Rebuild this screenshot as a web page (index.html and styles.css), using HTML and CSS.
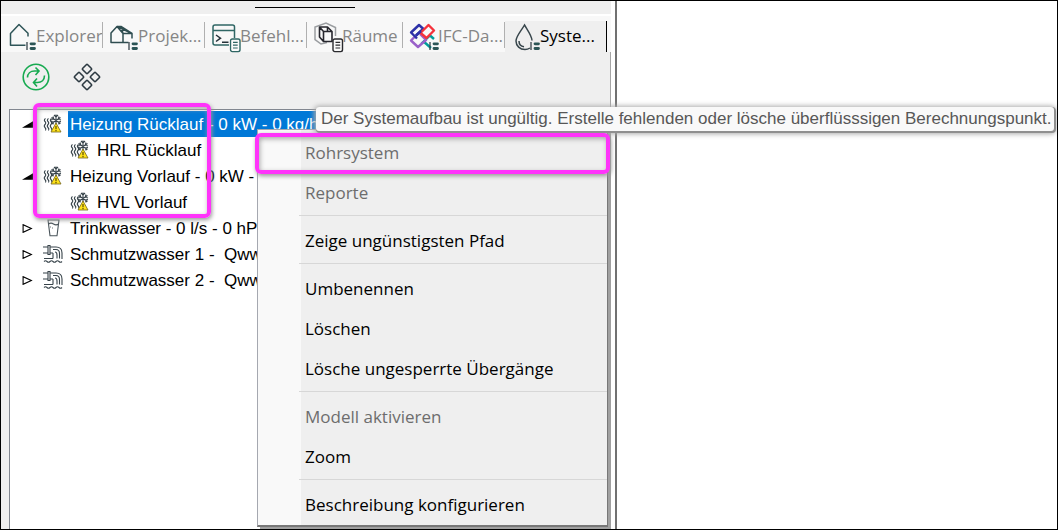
FILE: index.html
```html
<!DOCTYPE html>
<html lang="de">
<head>
<meta charset="utf-8">
<meta name="viewport" content="width=device-width, initial-scale=1">
<title>Systeme</title>
<link rel="stylesheet" href="styles.css">
</head>
<body>
<svg class="defs" aria-hidden="true">
  <defs>
    <symbol id="list-badge" viewBox="0 0 10 9">
      <path d="M1 0v8" stroke="#37434a" stroke-width="1.3"/>
      <path d="M5 1.800h3.500M5 6.500h3.500" stroke="#2c5555" stroke-width="2.800" stroke-linecap="round"/>
    </symbol>
    <symbol id="sheet-badge" viewBox="0 0 12 15">
      <rect x="1" y="1" width="9.5" height="12.6" rx="1.8" fill="#fafafa" stroke="currentColor" stroke-width="1.4"/>
      <path d="M3.5 4.4h4.7M3.5 7.2h4.7M3.5 10h4.7" stroke="currentColor" stroke-width="1.2"/>
    </symbol>
    <symbol id="heating" viewBox="0 0 20 20">
      <g fill="none" stroke="#37434a" stroke-width="1.100">
        <path d="M2.500 4.500q-2 1.500-.5 3t0 3 0 3 .5 3M5.500 4.500q-2 1.500-.5 3t0 3 0 3 .5 3M8.500 4.500q-2 1.500-.5 3t0 3 0 3 .5 3"/>
        <path d="M13 .5v12M8.500 3.500l9 6M17.500 3.500l-9 6M11 1l2 2 2-2M8 6l2.800-.8L10 2.500M18 6l-2.800-.8.8-2.700M8 7.500l2.500.5-.5 2.500M18 7.500l-2.500.5.5 2.500"/>
      </g>
      <path d="M13 9 18 18H8z" fill="#ffe31a" stroke="#75651a" stroke-width=".8" stroke-linejoin="round"/>
      <path d="M13 12v3.300M13 16v1.200" stroke="#5b4a00" stroke-width="1.200"/>
    </symbol>
    <symbol id="glass" viewBox="0 0 20 20">
      <path d="m5 2 2 15.8h7L16 2zM5.5 6q2.5-1.800 5 0t5 0" fill="none" stroke="#4a555b" stroke-width="1.1"/>
      <path d="M7.500 8.500v1M9.500 9.500v1" stroke="#4a555b" stroke-width=".8"/>
    </symbol>
    <symbol id="sewage" viewBox="0 0 20 20">
      <g fill="none" stroke="#37434a" stroke-width="1.1">
        <path d="M0 3h5M0 9h5M5 1.500h2v9H5zM7 3h6q6 0 6 6v6M7 9h3M10 5.500h3q3.500 0 3.500 4v5M10 9v5.500M12 8q2 0 2 3v3.500M1 14.500h9"/>
        <path d="M1 17.500q1.500-1.500 3 0t3 0 3 0 3 0 3 0 3 0"/>
      </g>
    </symbol>
  </defs>
</svg>

<div class="app">
  <section class="panel">
    <div class="grip"></div>
    <nav class="tabs" role="tablist" aria-label="Ansichten">
      <button class="tab" role="tab">
        <svg class="tab-icon" viewBox="0 0 28 30" fill="none">
          <path d="M20 14.500v-3.300L11 2.500 2.500 11.500v11.800h15" stroke="#2f5558" stroke-width="1.500" stroke-linejoin="round"/>
          <use href="#list-badge" x="18" y="20" width="10" height="9"/>
        </svg><span>Explorer</span>
      </button>
      <button class="tab" role="tab">
        <svg class="tab-icon" viewBox="0 0 28 30" fill="none">
          <path d="M13 20.500H1v-9.500L7 4.500l6 7zM7 4.500h4L22 11.500v5M13 11.500l9 0M13 20.500h5.500M7 4.500l15 7M11 4.500l2 7" stroke="#2f4d50" stroke-width="1.500" stroke-linejoin="round"/>
          <use href="#list-badge" x="18" y="20" width="10" height="9"/>
        </svg><span>Projek...</span>
      </button>
      <button class="tab" role="tab">
        <svg class="tab-icon teal" viewBox="0 0 28 30" fill="none">
          <path d="M17 23H3q-2 0-2-2V5q0-2 2-2h17.500q2 0 2 2v11M1 8.500h21.500" stroke="#2f6664" stroke-width="1.500"/>
          <path d="m4 13 4.500 3.200L4 19.500M10 20.300h6.500" stroke="#26323a" stroke-width="1.500"/>
          <use href="#sheet-badge" x="17.500" y="16" width="12" height="15"/>
        </svg><span>Befehl...</span>
      </button>
      <button class="tab" role="tab">
        <svg class="tab-icon dark" viewBox="0 0 28 30" fill="none">
          <path d="M13 20.500 7 22 1 17.500V5L12 1l9.500 4.500V14" stroke="#9a9da0" stroke-width="1.500"/>
          <path d="M5.500 5v10l4 4.500h8.500v-10L13.500 5zM9.500 19.500v-10h8.500M5.500 5l4 4.500M13.500 5v4.500" stroke="#26262d" stroke-width="1.600" stroke-linejoin="round"/>
          <use href="#sheet-badge" x="18" y="16" width="12" height="15"/>
        </svg><span>Räume</span>
      </button>
      <button class="tab" role="tab">
        <svg class="tab-icon" viewBox="0 0 28 30" fill="none">
          <g stroke-width="2.400" stroke-linejoin="round">
            <path d="m24 17-4-3.500-8.500 8M13 19l8 7" stroke="#009d9b"/>
            <path d="m6 13.500-5 5 7 6.500 8-7-6-6" stroke="#9a61c9"/>
            <path d="m7 16.500-6-6 8-7.500 5 4.500M13 7l-7 6.500" stroke="#2d31a8"/>
            <path d="M10 11.500 18.500 3l5.500 5.500-7.500 7.500-7-6" stroke="#f5323c"/>
            <path d="m6 13.500 5-4.500" stroke="#2d31a8"/>
          </g>
          <use href="#list-badge" x="19" y="20" width="10" height="9"/>
        </svg><span>IFC-Da...</span>
      </button>
      <button class="tab active" role="tab" aria-selected="true">
        <svg class="tab-icon" viewBox="0 0 28 30" fill="none">
          <path d="M20 18.500C20 14 15.500 8 12.500 3 9.500 8.500 4 14 4 19c0 5 4 8.500 9 8.500 2 0 3.500-.5 5-1.500M7 19c0 3 2 5.300 5 5.800" stroke="#37454b" stroke-width="1.500"/>
          <use href="#list-badge" x="18" y="20" width="10" height="9"/>
        </svg><span>Syste...</span>
      </button>
    </nav>

    <div class="body">
      <div class="toolbar">
        <button class="tool" aria-label="Aktualisieren">
          <svg viewBox="0 0 28 28" fill="none" stroke="#17aa50" stroke-width="1.600">
            <circle cx="14" cy="14" r="12.800"/>
            <path d="M5.500 14.500c0-4 3-6.500 7-6.500h4M13.500 4.500 17 8l-3.500 4M22.500 12.500c0 4.500-3 7-7 7h-3.500M15 15.500 11.500 19.500l3.500 4"/>
          </svg>
        </button>
        <button class="tool" aria-label="Kacheln">
          <svg viewBox="0 0 28 28" fill="none" stroke="#2d3a42" stroke-width="1.600">
            <rect x="-3.500" y="-3.500" width="7" height="7" rx="1" transform="translate(14 6) rotate(45)"/>
            <rect x="-3.500" y="-3.500" width="7" height="7" rx="1" transform="translate(6 14) rotate(45)"/>
            <rect x="-3.500" y="-3.500" width="7" height="7" rx="1" transform="translate(22 14) rotate(45)"/>
            <rect x="-3.500" y="-3.500" width="7" height="7" rx="1" transform="translate(14 22) rotate(45)"/>
          </svg>
        </button>
      </div>

      <ul class="tree" role="tree">
        <li role="treeitem" aria-expanded="true">
          <div class="row">
            <button class="toggle" aria-label="Zuklappen"><svg viewBox="0 0 10 8"><path d="M10 1v6H0z"/></svg></button>
            <svg class="node-icon"><use href="#heating"/></svg>
            <span class="label selected">Heizung Rücklauf - 0 kW - 0 kg/h</span>
          </div>
          <ul role="group">
            <li role="treeitem"><div class="row child"><svg class="node-icon"><use href="#heating"/></svg><span class="label">HRL Rücklauf</span></div></li>
          </ul>
        </li>
        <li role="treeitem" aria-expanded="true">
          <div class="row">
            <button class="toggle" aria-label="Zuklappen"><svg viewBox="0 0 10 8"><path d="M10 1v6H0z"/></svg></button>
            <svg class="node-icon"><use href="#heating"/></svg>
            <span class="label">Heizung Vorlauf - 0 kW - 0 kg/h</span>
          </div>
          <ul role="group">
            <li role="treeitem"><div class="row child"><svg class="node-icon"><use href="#heating"/></svg><span class="label">HVL Vorlauf</span></div></li>
          </ul>
        </li>
        <li role="treeitem" aria-expanded="false">
          <div class="row">
            <button class="toggle closed" aria-label="Aufklappen"><svg viewBox="0 0 10 8"><path d="M1 .5v7L8.500 4z"/></svg></button>
            <svg class="node-icon"><use href="#glass"/></svg>
            <span class="label">Trinkwasser - 0 l/s - 0 hPa</span>
          </div>
        </li>
        <li role="treeitem" aria-expanded="false">
          <div class="row">
            <button class="toggle closed" aria-label="Aufklappen"><svg viewBox="0 0 10 8"><path d="M1 .5v7L8.500 4z"/></svg></button>
            <svg class="node-icon"><use href="#sewage"/></svg>
            <span class="label">Schmutzwasser 1 -&nbsp; Qww</span>
          </div>
        </li>
        <li role="treeitem" aria-expanded="false">
          <div class="row">
            <button class="toggle closed" aria-label="Aufklappen"><svg viewBox="0 0 10 8"><path d="M1 .5v7L8.500 4z"/></svg></button>
            <svg class="node-icon"><use href="#sewage"/></svg>
            <span class="label">Schmutzwasser 2 -&nbsp; Qww</span>
          </div>
        </li>
      </ul>
    </div>
  </section>
  <main class="canvas"></main>

  <div class="menu" role="menu">
    <button role="menuitem" disabled>Rohrsystem</button>
    <button role="menuitem" disabled>Reporte</button>
    <hr>
    <button role="menuitem">Zeige ungünstigsten Pfad</button>
    <hr>
    <button role="menuitem">Umbenennen</button>
    <button role="menuitem">Löschen</button>
    <button role="menuitem">Lösche ungesperrte Übergänge</button>
    <hr>
    <button role="menuitem" disabled>Modell aktivieren</button>
    <button role="menuitem">Zoom</button>
    <hr>
    <button role="menuitem">Beschreibung konfigurieren</button>
  </div>
  <div class="tooltip" role="tooltip">Der Systemaufbau ist ungültig. Erstelle fehlenden oder lösche überflüsssigen Berechnungspunkt.</div>
  <div class="marker marker-tree"></div>
  <div class="marker marker-menu"></div>
</div>
</body>
</html>
```

FILE: styles.css
```css
* { box-sizing: border-box; }

body {
  margin: 0;
  font-family: "Open Sans", "Noto Sans", sans-serif;
  color: #000;
}

button {
  margin: 0;
  padding: 0;
  border: 0;
  background: none;
  font: inherit;
  color: inherit;
}

ul {
  margin: 0;
  padding: 0;
  list-style: none;
}

.defs {
  position: absolute;
  width: 0;
  height: 0;
}

.app {
  position: relative;
  display: flex;
  min-height: 100vh;
  overflow: hidden;
  border: 1px solid #000;
  background: #fff;
}

.panel {
  display: flex;
  flex-direction: column;
  flex: 0 0 610px;
}

.grip {
  display: flex;
  justify-content: center;
  height: 13px;
  padding: 6px 2px 0 0;
  background: #efefef;
}

.grip::before {
  content: "";
  width: 100px;
  height: 1px;
  background: #000;
}

.tabs {
  display: flex;
  padding: 5px 4px 0 0;
  border-top: 2px solid #fff;
  background: #f8f8f8;
}

.tab {
  display: flex;
  align-items: center;
  flex: 1 1 102px;
  min-width: 0;
  height: 31px;
  padding-left: 7px;
  position: relative;
  color: #868686;
  font-size: 17px;
  white-space: nowrap;
}

.tab::after {
  content: "";
  position: absolute;
  right: 0;
  top: 1px;
  width: 1px;
  height: 26px;
  background: #b0b0b0;
}

.tab:nth-child(4) { flex-basis: 96px; }

.tab span { margin-bottom: 2px; }

.tab.active {
  background: #efefef;
  color: #000;
}

.tab.active::after {
  top: 0;
  height: 31px;
  background: #000;
}

.tab-icon {
  flex: none;
  width: 28px;
  height: 30px;
  overflow: visible;
}

.teal { color: #2f6664; }
.dark { color: #2a2a2e; }

.body {
  display: flex;
  flex-direction: column;
  flex: 1;
  padding: 11px 12px 0 8px;
  border-right: 1px solid #a5a5a5;
  background: #efefef;
}

.toolbar {
  display: flex;
  gap: 23px;
  padding: 0 13px 18px;
}

.tool, .tool svg {
  display: block;
  width: 28px;
  height: 28px;
}

.tree {
  flex: 1;
  padding-top: 1px;
  border: 1px solid #828790;
  border-bottom: 0;
  background: #fff;
  font-family: "Liberation Sans", Arial, sans-serif;
  font-size: 17px;
}

.row {
  display: flex;
  align-items: center;
  height: 26px;
  padding-left: 12px;
}

.row.child { padding-left: 60px; }

.toggle {
  width: 11px;
  margin-right: 10px;
}

.toggle svg {
  display: block;
  width: 11px;
  height: 9px;
}

.closed svg {
  fill: #fff;
  stroke: #000;
}

.node-icon {
  flex: none;
  width: 20px;
  height: 20px;
  margin-right: 5px;
}

.label {
  height: 26px;
  padding: 0 2px;
  line-height: 27px;
  white-space: nowrap;
}

.selected {
  background: #0078d7;
  color: #fff;
}

.canvas {
  flex: 1;
  margin-left: 4px;
  border-left: 2px solid #717171;
  background: #fff;
}

.menu {
  position: absolute;
  left: 256px;
  top: 128px;
  width: 351px;
  padding: 2px 0 1px 41px;
  border: 1px solid #a5a8b0;
  border-right: 1px solid #777;
  border-bottom: 2px solid #777;
  background: linear-gradient(to right, #f9f9f9 43px, #efefef 43px);
  box-shadow: 3px 2px 0 #a0a0a0;
  font-size: 17px;
}

.menu button {
  display: block;
  width: 100%;
  height: 40px;
  padding-left: 6px;
  text-align: left;
}

.menu button:disabled { color: #6d6d6d; }

.menu hr {
  height: 1px;
  margin: 3px 0 4px;
  border: 0;
  background: #d7d7d7;
}

.tooltip {
  position: absolute;
  left: 315px;
  top: 106px;
  height: 24px;
  padding: 0 2px 0 5px;
  border-radius: 3px;
  background: #f9f9f9;
  box-shadow: 1px 1px 0 1px #8f8f8f, 0 1px 5px 2px #aaa;
  color: #575757;
  font: 17px/24px "Liberation Sans", Arial, sans-serif;
  white-space: nowrap;
}

.marker {
  position: absolute;
  border: 4px solid #ff33fa;
  border-radius: 6px;
  box-shadow: 1px 2px 4px #999, inset 1px 2px 5px #aaa;
  pointer-events: none;
}

.marker-tree {
  left: 32px;
  top: 102px;
  width: 178px;
  height: 115px;
}

.marker-menu {
  left: 254px;
  top: 132px;
  width: 355px;
  height: 41px;
}
```
